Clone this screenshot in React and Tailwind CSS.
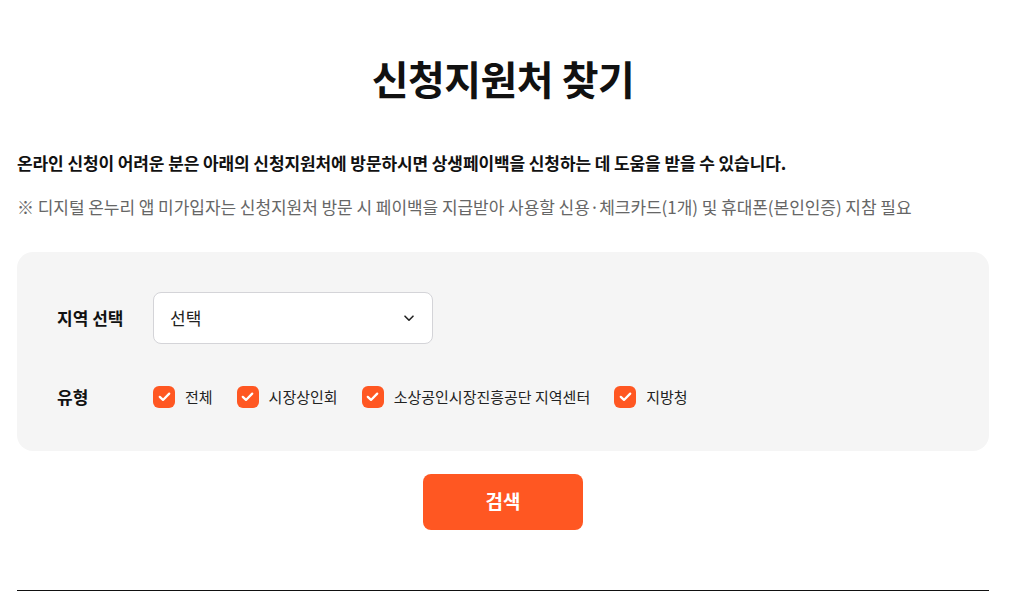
import { useState } from "react";

const TYPES = ["전체", "시장상인회", "소상공인시장진흥공단 지역센터", "지방청"];

function CheckBox({ label, checked, onChange }) {
  return (
    <label className="flex items-center gap-[10px] cursor-pointer">
      <span
        onClick={onChange}
        className={`flex h-[22px] w-[22px] items-center justify-center rounded-[6px] ${
          checked ? "bg-[#ff5722]" : "bg-white border border-[#ccc]"
        }`}
      >
        {checked && (
          <svg width="15" height="15" viewBox="0 0 14 14" fill="none">
            <path d="M2.6 7.3l3 2.9L11.4 4.3" stroke="white" strokeWidth="2.1" strokeLinecap="round" strokeLinejoin="round" />
          </svg>
        )}
      </span>
      <span className="text-[15px] text-[#222]">{label}</span>
    </label>
  );
}

export default function App() {
  const [checked, setChecked] = useState(TYPES.map(() => true));

  const toggle = (i) => setChecked((prev) => prev.map((v, j) => (j === i ? !v : v)));

  return (
    <div className="min-h-[611px] bg-white pl-[17px] pr-[21px] pt-[50px] font-['Noto_Sans_CJK_KR','Noto_Sans',sans-serif] text-[#111]">
      <h1 className="text-center text-[40px] font-bold leading-[56px] tracking-[-0.5px]">신청지원처 찾기</h1>

      <p className="mt-[45px] text-[17px] font-bold leading-[24px] tracking-[-0.1px]">
        온라인 신청이 어려운 분은 아래의 신청지원처에 방문하시면 상생페이백을 신청하는 데 도움을 받을 수 있습니다.
      </p>
      <p className="mt-[20px] text-[17px] leading-[24px] tracking-[-0.05px] text-[#666]">
        ※ 디지털 온누리 앱 미가입자는 신청지원처 방문 시 페이백을 지급받아 사용할 신용·체크카드(1개) 및 휴대폰(본인인증) 지참 필요
      </p>

      {/* Search panel */}
      <div className="mt-[33px] rounded-[16px] bg-[#f5f5f5] px-[40px] pt-[40px] pb-[41px]">
        <div className="flex items-center">
          <span className="w-[96px] text-[17px] font-bold">지역 선택</span>
          <button className="flex h-[52px] w-[280px] items-center justify-between rounded-[8px] border border-[#d4d4d8] bg-white pl-[16px] pr-[16px] text-[17px] text-[#222]">
            <span>선택</span>
            <svg width="14" height="14" viewBox="0 0 14 14" fill="none">
              <path d="M3 5.2l4 4 4-4" stroke="#222" strokeWidth="1.6" strokeLinecap="round" strokeLinejoin="round" />
            </svg>
          </button>
        </div>
        <div className="mt-[40px] flex items-center">
          <span className="w-[96px] text-[17px] font-bold">유형</span>
          <div className="flex items-center gap-[24px]">
            {TYPES.map((t, i) => (
              <CheckBox key={t} label={t} checked={checked[i]} onChange={() => toggle(i)} />
            ))}
          </div>
        </div>
      </div>

      <div className="mt-[23px] flex justify-center">
        <button className="h-[56px] w-[160px] rounded-[8px] bg-[#ff5722] text-[19px] font-bold text-white">검색</button>
      </div>

      <div className="mt-[60px] border-t border-[#111]" />
    </div>
  );
}
